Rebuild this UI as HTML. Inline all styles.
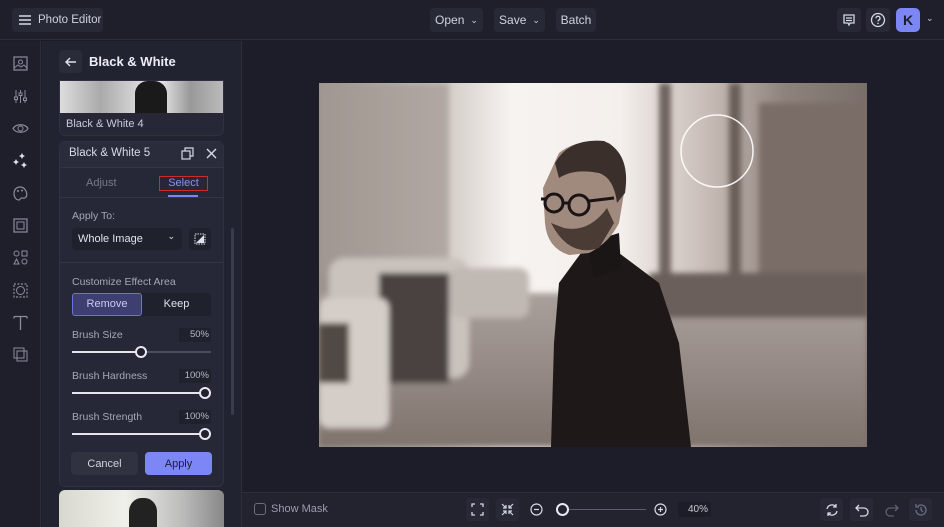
<!DOCTYPE html>
<html><head><meta charset="utf-8"><style>
*{box-sizing:border-box;margin:0;padding:0}
body{width:944px;height:527px;overflow:hidden;background:#1c1d28;font-family:"Liberation Sans",sans-serif;color:#d8d9e6;position:relative;font-size:12px}
.abs{position:absolute;white-space:nowrap}
.btn{position:absolute;white-space:nowrap;background:#272936;border-radius:4px;color:#d0d2de;font-size:12px;display:flex;align-items:center;justify-content:center}
.lbl{position:absolute;font-size:10.5px;color:#a4a7b8}
.pct{position:absolute;width:32px;height:14px;background:#1f212c;border-radius:2px;font-size:9.5px;color:#b8bac8;text-align:right;padding-right:2px;line-height:14px}
.track{position:absolute;height:2px;background:#4a4d5e;left:72px;width:139px}
.fill{position:absolute;height:2px;background:#e4e5ee;left:0;top:0}
.knob{position:absolute;width:12px;height:12px;border-radius:50%;border:2px solid #e8e9f0;background:#20222e;top:-5px}
.ic{position:absolute;left:12px;width:17px;height:17px}
</style></head><body>
<!-- top bar -->
<div class="abs" style="left:0;top:0;width:944px;height:40px;background:#1e1f2a;border-bottom:1px solid #2c2e3b"></div>
<div class="btn" style="left:12px;top:8px;width:91px;height:24px;justify-content:flex-start;padding-left:6px;font-size:11.5px">
<svg width="14" height="12" viewBox="0 0 14 12"><path d="M1 2h12M1 6h12M1 10h12" stroke="#d6d8e4" stroke-width="1.5"/></svg><span style="margin-left:6px">Photo Editor</span></div>
<div class="btn" style="left:430px;top:8px;width:53px;height:24px">Open <span style="margin-left:6px;font-size:9px">⌄</span></div>
<div class="btn" style="left:494px;top:8px;width:51px;height:24px">Save <span style="margin-left:6px;font-size:9px">⌄</span></div>
<div class="btn" style="left:556px;top:8px;width:40px;height:24px">Batch</div>
<div class="btn" style="left:837px;top:8px;width:24px;height:24px"><svg width="14" height="14" viewBox="0 0 14 14"><path d="M2 2h10v8H8l-1 2-1-2H2z M4 5h6M4 7.5h6" stroke="#d6d8e4" stroke-width="1.3" fill="none"/></svg></div>
<div class="btn" style="left:866px;top:8px;width:24px;height:24px"><svg width="16" height="16" viewBox="0 0 16 16"><circle cx="8" cy="8" r="6.5" stroke="#d6d8e4" stroke-width="1.3" fill="none"/><path d="M6 6.3a2 2 0 1 1 2.8 1.8c-.6.3-.8.7-.8 1.3" stroke="#d6d8e4" stroke-width="1.3" fill="none"/><circle cx="8" cy="11.3" r=".8" fill="#d6d8e4"/></svg></div>
<div class="abs" style="left:896px;top:8px;width:24px;height:24px;background:#7c87f5;border-radius:5px;color:#1a1c2a;font-weight:bold;font-size:14px;text-align:center;line-height:24px">K</div>
<div class="abs" style="left:926px;top:13px;font-size:9px;color:#c8cad6">⌄</div>
<!-- left rail -->
<div class="abs" style="left:0;top:41px;width:41px;height:486px;background:#1e1f2a;border-right:1px solid #2c2e3b"></div>
<svg class="ic" style="top:55px" viewBox="0 0 17 17"><rect x="2" y="2" width="13" height="13" stroke="#8a8da0" fill="none" stroke-width="1.2"/><circle cx="8.5" cy="7" r="2" stroke="#8a8da0" fill="none"/><path d="M2 13l4-3 3 2 3-2 3 3" stroke="#8a8da0" fill="none"/></svg>
<svg class="ic" style="top:88px" viewBox="0 0 17 17"><path d="M4 2v13M8.5 2v13M13 2v13" stroke="#8a8da0"/><rect x="2.5" y="9" width="3" height="2.5" fill="#1e1f2a" stroke="#8a8da0"/><rect x="7" y="5" width="3" height="2.5" fill="#1e1f2a" stroke="#8a8da0"/><rect x="11.5" y="10" width="3" height="2.5" fill="#1e1f2a" stroke="#8a8da0"/></svg>
<svg class="ic" style="top:120px" viewBox="0 0 17 17"><path d="M1 8.5C4 3.5 13 3.5 16 8.5 13 13.5 4 13.5 1 8.5z" stroke="#8a8da0" fill="none" stroke-width="1.2"/><circle cx="8.5" cy="8.5" r="2.5" stroke="#8a8da0" fill="none"/></svg>
<svg class="ic" style="top:152px" viewBox="0 0 17 17"><path d="M10 1l1 2 2 1-2 1-1 2-1-2-2-1 2-1zM4 7l1 2 2 1-2 1-1 2-1-2-2-1 2-1zM12 10l1 2 2 1-2 1-1 2-1-2-2-1 2-1z" fill="#e0e2ee"/></svg>
<svg class="ic" style="top:185px" viewBox="0 0 17 17"><path d="M8.5 2C4 2 2 5 2 8.5S4 15 7 15c1.5 0 1-2 2.5-2s4 1 5-2-1.5-9-6-9z" stroke="#8a8da0" fill="none" stroke-width="1.2"/><circle cx="6" cy="6" r="1" fill="#8a8da0"/><circle cx="10" cy="5.5" r="1" fill="#8a8da0"/></svg>
<svg class="ic" style="top:217px" viewBox="0 0 17 17"><rect x="2" y="2" width="13" height="13" stroke="#8a8da0" fill="none" stroke-width="1.2"/><rect x="5" y="5" width="7" height="7" stroke="#8a8da0" fill="none"/></svg>
<svg class="ic" style="top:249px" viewBox="0 0 17 17"><circle cx="4.5" cy="4.5" r="2.5" stroke="#8a8da0" fill="none"/><rect x="10" y="2" width="5" height="5" stroke="#8a8da0" fill="none"/><path d="M4.5 10l2.5 5H2z" stroke="#8a8da0" fill="none"/><circle cx="12.5" cy="12.5" r="2.5" stroke="#8a8da0" fill="none"/></svg>
<svg class="ic" style="top:282px" viewBox="0 0 17 17"><rect x="2" y="2" width="13" height="13" stroke="#8a8da0" fill="none" stroke-dasharray="2 1.5" stroke-width="1.2"/><circle cx="8.5" cy="8.5" r="4" stroke="#8a8da0" fill="none"/></svg>
<svg class="ic" style="top:314px" viewBox="0 0 17 17"><path d="M2 2.5h13M8.5 2.5V16M2 2.5v2M15 2.5v2" stroke="#8a8da0" stroke-width="1.3" fill="none"/></svg>
<svg class="ic" style="top:346px" viewBox="0 0 17 17"><rect x="2" y="2" width="10" height="10" stroke="#8a8da0" fill="none"/><rect x="5" y="5" width="10" height="10" stroke="#8a8da0" fill="none"/></svg>
<!-- panel -->
<div class="abs" style="left:42px;top:41px;width:200px;height:486px;background:#222330;border-right:1px solid #2c2e3b"></div>
<div class="btn" style="left:59px;top:50px;width:23px;height:23px;background:#2a2c3a"><svg width="12" height="10" viewBox="0 0 12 10"><path d="M11 5H1.5M5 1L1 5l4 4" stroke="#e0e2ee" stroke-width="1.4" fill="none"/></svg></div>
<div class="abs" style="left:89px;top:54px;font-size:13px;font-weight:bold;color:#eceef6">Black &amp; White</div>
<div class="abs" style="left:59px;top:80px;width:165px;height:56px;background:#262837;border-radius:0 0 6px 6px;border:1px solid #2f3142;overflow:hidden">
<div style="height:32px;background:linear-gradient(90deg,#ddd 0,#aaa 25%,#c8c8c8 40%,#eee 60%,#999 80%,#bbb 100%);position:relative"><div style="position:absolute;left:75px;top:0;width:32px;height:32px;background:#1a1a1a;border-radius:40% 40% 0 0"></div></div>
<div style="padding:5px 6px;font-size:11px;color:#c8cae0">Black &amp; White 4</div></div>
<div class="abs" style="left:59px;top:141px;width:165px;height:346px;background:#262837;border-radius:6px;border:1px solid #2f3142"></div>
<div class="abs" style="left:60px;top:142px;width:163px;height:26px;background:#2a2c3b;border-bottom:1px solid #33364a"></div>
<div class="abs" style="left:69px;top:147px;font-size:11.5px;color:#d8dae8">Black &amp; White 5</div>
<svg class="abs" style="left:181px;top:147px" width="13" height="13" viewBox="0 0 13 13"><rect x="1" y="4" width="8" height="8" stroke="#d8dae8" fill="none" stroke-width="1.2"/><path d="M4 4V1h8v8H9" stroke="#d8dae8" fill="none" stroke-width="1.2"/></svg>
<svg class="abs" style="left:206px;top:148px" width="11" height="11" viewBox="0 0 11 11"><path d="M1 1l9 9M10 1l-9 9" stroke="#d8dae8" stroke-width="1.4"/></svg>
<div class="abs" style="left:86px;top:177px;font-size:11px;color:#777a8e">Adjust</div>
<div class="abs" style="left:159px;top:176px;width:49px;height:15px;border:1.5px solid #d02a2a;font-size:11px;color:#8a93f0;text-align:center;line-height:12px">Select</div>
<div class="abs" style="left:168px;top:195px;width:30px;height:2px;background:#7c87f5"></div>
<div class="abs" style="left:60px;top:197px;width:163px;height:1px;background:#33364a"></div>
<div class="lbl" style="left:72px;top:210px">Apply To:</div>
<div class="abs" style="left:72px;top:228px;width:110px;height:22px;background:#1f212c;border-radius:4px;font-size:11px;color:#e0e2ee;padding:5px 6px">Whole Image<span style="position:absolute;right:7px;top:3px;font-size:9px">⌄</span></div>
<div class="abs" style="left:189px;top:228px;width:22px;height:22px;background:#1f212c;border-radius:4px"><svg width="22" height="22" viewBox="0 0 22 22"><rect x="6" y="6" width="10" height="10" stroke="#e0e2ee" fill="none" stroke-dasharray="1.5 1"/><path d="M7 15L15 7v8z" fill="#e0e2ee"/></svg></div>
<div class="abs" style="left:60px;top:262px;width:163px;height:1px;background:#33364a"></div>
<div class="lbl" style="left:72px;top:276px">Customize Effect Area</div>
<div class="abs" style="left:72px;top:293px;width:139px;height:23px;background:#1f212c;border-radius:3px"></div>
<div class="abs" style="left:72px;top:293px;width:70px;height:23px;background:#3e3f70;border:1px solid #6a72d8;border-radius:3px;font-size:11px;color:#c8ccf2;text-align:center;line-height:21px">Remove</div>
<div class="abs" style="left:142px;top:293px;width:69px;height:23px;font-size:11px;color:#e0e2ee;text-align:center;line-height:23px">Keep</div>
<div class="lbl" style="left:72px;top:329px">Brush Size</div><div class="pct" style="left:179px;top:328px">50%</div>
<div class="track" style="top:351px"><div class="fill" style="width:70px"></div><div class="knob" style="left:63px"></div></div>
<div class="lbl" style="left:72px;top:370px">Brush Hardness</div><div class="pct" style="left:179px;top:369px">100%</div>
<div class="track" style="top:392px"><div class="fill" style="width:133px"></div><div class="knob" style="left:127px"></div></div>
<div class="lbl" style="left:72px;top:411px">Brush Strength</div><div class="pct" style="left:179px;top:410px">100%</div>
<div class="track" style="top:433px"><div class="fill" style="width:133px"></div><div class="knob" style="left:127px"></div></div>
<div class="btn" style="left:71px;top:452px;width:67px;height:23px;background:#30323f;font-size:11px">Cancel</div>
<div class="btn" style="left:145px;top:452px;width:67px;height:23px;background:#7c87f5;color:#1a1c3a;font-size:11px">Apply</div>
<div class="abs" style="left:231px;top:228px;width:3px;height:187px;background:#3a3c4c;border-radius:2px"></div>
<div class="abs" style="left:59px;top:490px;width:165px;height:37px;border-radius:6px 6px 0 0;overflow:hidden;background:linear-gradient(90deg,#d8d8d0,#f0f0ea 40%,#bbb 75%,#888)"><div style="position:absolute;left:70px;top:8px;width:28px;height:30px;background:#222;border-radius:45% 45% 0 0"></div></div>
<!-- image -->
<svg class="abs" style="left:319px;top:83px" width="548" height="364" viewBox="0 0 548 364">
<defs>
<linearGradient id="sky" x1="0" x2="1"><stop offset="0" stop-color="#9c928d"/><stop offset=".22" stop-color="#cfc8c3"/><stop offset=".35" stop-color="#f7f3f0"/><stop offset=".55" stop-color="#f4efec"/><stop offset=".72" stop-color="#c4b8b2"/><stop offset=".85" stop-color="#8e827c"/><stop offset="1" stop-color="#7a6e69"/></linearGradient>
<linearGradient id="road" x1="0" y1="0" x2="0" y2="1"><stop offset="0" stop-color="#aaa09b"/><stop offset="1" stop-color="#7f736d"/></linearGradient>
<filter id="b"><feGaussianBlur stdDeviation="3"/></filter>
</defs>
<rect width="548" height="364" fill="url(#sky)"/>
<g filter="url(#b)">
<rect x="0" y="0" width="130" height="190" fill="#a39993" opacity=".7"/>
<rect x="440" y="20" width="108" height="200" fill="#7a6d67"/>
<rect x="340" y="0" width="12" height="200" fill="#6f635e"/>
<rect x="410" y="0" width="12" height="200" fill="#6a5e59"/>
<rect x="0" y="210" width="548" height="154" fill="url(#road)"/>
<rect x="330" y="190" width="218" height="45" fill="#6a5f5a"/>
<rect x="10" y="175" width="140" height="120" rx="15" fill="#c9c2bd"/>
<rect x="60" y="190" width="70" height="110" fill="#4a423f"/>
<rect x="0" y="215" width="70" height="130" rx="10" fill="#d4cdc8"/>
<rect x="0" y="240" width="30" height="60" fill="#514845"/>
<rect x="130" y="185" width="80" height="50" rx="10" fill="#c0b8b3"/>
</g>
<path d="M240 200 L262 170 L290 150 L300 170 L340 200 L360 260 L372 364 L232 364 L235 260 Z" fill="#1e1918"/>
<path d="M268 160 L300 150 L302 185 L275 195 Z" fill="#1a1616"/>
<path d="M240 70 Q258 55 290 60 Q310 75 305 110 L300 140 Q290 160 270 170 L250 172 Q228 165 226 140 L224 105 Z" fill="#a08a7e"/>
<path d="M236 80 Q250 55 285 58 Q312 70 306 110 L298 120 Q295 95 280 90 Q255 85 240 95 Z" fill="#3a2f2b"/>
<path d="M232 140 Q250 175 280 165 L295 140 L288 125 Q270 150 245 145 Z" fill="#4a3b35"/>
<circle cx="235" cy="120" r="9" fill="none" stroke="#1a1414" stroke-width="3"/>
<circle cx="260" cy="122" r="10" fill="none" stroke="#1a1414" stroke-width="3"/>
<path d="M222 116h5M244 120h6M270 118l25-3" stroke="#1a1414" stroke-width="3"/>
<circle cx="398" cy="68" r="36" fill="none" stroke="#fff" stroke-width="1.5" opacity=".9"/>
</svg>
<!-- bottom bar -->
<div class="abs" style="left:242px;top:492px;width:702px;height:35px;background:#22232f;border-top:1px solid #2c2e3b"></div>
<div class="abs" style="left:254px;top:503px;width:12px;height:12px;border:1px solid #6a6d80;border-radius:3px"></div>
<div class="abs" style="left:271px;top:503px;font-size:11px;color:#9a9db0">Show Mask</div>
<div class="btn" style="left:466px;top:498px;width:23px;height:23px"><svg width="13" height="13" viewBox="0 0 13 13"><path d="M1 4V1h3M9 1h3v3M12 9v3H9M4 12H1V9" stroke="#d6d8e4" stroke-width="1.3" fill="none"/></svg></div>
<div class="btn" style="left:496px;top:498px;width:23px;height:23px"><svg width="13" height="13" viewBox="0 0 13 13"><path d="M1 1l4 4M5 2v3H2M12 1L8 5M8 2v3h3M1 12l4-4M2 8h3v3M12 12L8 8M11 8H8v3" stroke="#d6d8e4" stroke-width="1.2" fill="none"/></svg></div>
<svg class="abs" style="left:530px;top:503px" width="13" height="13" viewBox="0 0 13 13"><circle cx="6.5" cy="6.5" r="5.5" stroke="#d6d8e4" fill="none" stroke-width="1.2"/><path d="M4 6.5h5" stroke="#d6d8e4" stroke-width="1.2"/></svg>
<div class="abs" style="left:556px;top:509px;width:90px;height:1px;background:#5a5d70"></div>
<div class="abs" style="left:556px;top:503px;width:13px;height:13px;border-radius:50%;border:2px solid #e8e9f0;background:#22232f"></div>
<svg class="abs" style="left:654px;top:503px" width="13" height="13" viewBox="0 0 13 13"><circle cx="6.5" cy="6.5" r="5.5" stroke="#d6d8e4" fill="none" stroke-width="1.2"/><path d="M4 6.5h5M6.5 4v5" stroke="#d6d8e4" stroke-width="1.2"/></svg>
<div class="abs" style="left:678px;top:502px;width:33px;height:15px;background:#1c1d27;border-radius:2px;font-size:10px;color:#c8cad6;text-align:right;padding-right:3px;line-height:15px">40%</div>
<div class="btn" style="left:820px;top:498px;width:23px;height:23px"><svg width="14" height="14" viewBox="0 0 14 14"><path d="M2 6a5 5 0 0 1 9-2M12 8a5 5 0 0 1-9 2M11 1v3H8M3 13v-3h3" stroke="#d6d8e4" stroke-width="1.3" fill="none"/></svg></div>
<div class="btn" style="left:850px;top:498px;width:23px;height:23px"><svg width="14" height="14" viewBox="0 0 14 14"><path d="M4 2L1 5l3 3M1 5h8a4 4 0 0 1 0 8H5" stroke="#d6d8e4" stroke-width="1.3" fill="none"/></svg></div>
<div class="btn" style="left:880px;top:498px;width:23px;height:23px;background:none"><svg width="14" height="14" viewBox="0 0 14 14"><path d="M10 2l3 3-3 3M13 5H5a4 4 0 0 0 0 8h4" stroke="#5c5f70" stroke-width="1.3" fill="none"/></svg></div>
<div class="btn" style="left:909px;top:498px;width:23px;height:23px"><svg width="14" height="14" viewBox="0 0 14 14"><path d="M2 7a5 5 0 1 0 2-4M2 1v3h3M7 4v3l2 2" stroke="#6a6d80" stroke-width="1.3" fill="none"/></svg></div>
</body></html>
